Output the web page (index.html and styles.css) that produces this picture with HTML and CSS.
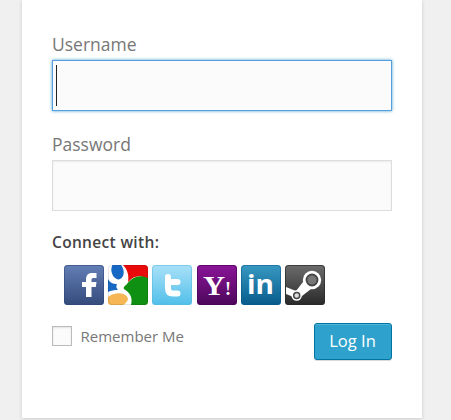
FILE: index.html
```html
<!DOCTYPE html>
<html lang="en">
<head>
<meta charset="utf-8">
<title>Log In</title>
<link rel="stylesheet" href="styles.css">
</head>
<body>
<form class="login">
  <label class="label" for="user">Username</label>
  <div class="field field-active"><span class="caret"></span><input id="user" type="text"></div>
  <label class="label label-password" for="pass">Password</label>
  <div class="field"><input id="pass" type="password"></div>
  <div class="connect">Connect with:</div>
  <div class="providers">
    <svg viewBox="0 0 40 40">
      <defs>
        <linearGradient id="fb" x2="0" y2="1"><stop stop-color="#637fb5"/><stop offset="1" stop-color="#344b7c"/></linearGradient>
        <linearGradient id="tw" x2="0" y2="1"><stop stop-color="#a9e1f8"/><stop offset="1" stop-color="#51bfe9"/></linearGradient>
        <linearGradient id="ya" x2="0" y2="1"><stop stop-color="#8b1598"/><stop offset="1" stop-color="#4c075b"/></linearGradient>
        <linearGradient id="li" x2="0" y2="1"><stop stop-color="#3899c2"/><stop offset="1" stop-color="#075b8b"/></linearGradient>
        <linearGradient id="st" x2="0" y2="1"><stop stop-color="#6c6c6c"/><stop offset="1" stop-color="#292929"/></linearGradient>
        <clipPath id="tile"><rect width="40" height="40" rx="3.5"/></clipPath>
      </defs>
      <rect width="40" height="40" rx="3.5" fill="url(#fb)"/>
      <rect x=".5" y=".5" width="39" height="39" rx="3" fill="none" stroke="#2d467a" stroke-opacity=".55"/>
      <path d="M22 32V22h-4v-5h4v-2.500c0-4.500 2.500-6.500 6-6.500h4.500v5H29.500c-1.600 0-2 .7-2 2v2h5l-.7 5H27.500v10z" fill="#fff"/>
    </svg>
    <svg viewBox="0 0 40 40">
      <g clip-path="url(#tile)">
        <rect width="40" height="40" fill="#fff"/>
        <path d="M15 0h25v14c-8-5-15-3-20 3 1-6 0-12-5-17z" fill="#e90b0b"/>
        <path d="M40 13v27H23c2-8-1-12-7-16-1-2 1-3 3-5 5-7 13-10 21-6z" fill="#109012"/>
        <ellipse cx="9.500" cy="6" rx="6" ry="8.500" transform="rotate(-14 9.500 6)" fill="#1768c4"/>
        <path d="M0 14c2 4 5 5 9 5-1 2-1 4 1 6-4 0-7 .5-10 2z" fill="#1768c4"/>
        <ellipse cx="9" cy="35" rx="11" ry="6.500" transform="rotate(-8 9 35)" fill="#f5b653"/>
      </g>
      <rect x=".5" y=".5" width="39" height="39" rx="3" fill="none" stroke="#000" stroke-opacity=".1"/>
    </svg>
    <svg viewBox="0 0 40 40">
      <rect width="40" height="40" rx="3.500" fill="url(#tw)"/>
      <rect x=".5" y=".5" width="39" height="39" rx="3" fill="none" stroke="#58b9df" stroke-opacity=".55"/>
      <path d="M16 12v11.500q0 5 5 5h4.500M16 17h9.500" fill="none" stroke="#fff" stroke-width="6" stroke-linecap="round" stroke-linejoin="round"/>
    </svg>
    <svg viewBox="0 0 40 40">
      <rect width="40" height="40" rx="3.500" fill="url(#ya)"/>
      <rect x=".5" y=".5" width="39" height="39" rx="3" fill="none" stroke="#450455" stroke-opacity=".6"/>
      <text class="yahoo" x="6" y="29.500" textLength="22" lengthAdjust="spacingAndGlyphs">Y</text>
      <text class="bang" x="28" y="29.500">!</text>
    </svg>
    <svg viewBox="0 0 40 40">
      <rect width="40" height="40" rx="3.500" fill="url(#li)"/>
      <rect x=".5" y=".5" width="39" height="39" rx="3" fill="none" stroke="#07588a" stroke-opacity=".5"/>
      <text class="linkedin" x="6" y="29" textLength="27" lengthAdjust="spacingAndGlyphs">in</text>
    </svg>
    <svg viewBox="0 0 40 40">
      <rect width="40" height="40" rx="3.500" fill="url(#st)"/>
      <path d="M1 22l10 4 7-9 9-2 8 4-9 5-9 7-6 4-5-4-5-2z" fill="#fff"/>
      <circle cx="27" cy="15" r="9.200" fill="#fff"/>
      <circle cx="27" cy="15" r="5.500" fill="#777" stroke="#444" stroke-width="1.800"/>
      <circle cx="11.700" cy="30.500" r="5.200" fill="#fff"/>
      <circle cx="11.700" cy="30.500" r="3" fill="#ddd" stroke="#444" stroke-width="1.500"/>
      <rect x=".5" y=".5" width="39" height="39" rx="3" fill="none" stroke="#292929" stroke-opacity=".7"/>
    </svg>
  </div>
  <div class="actions">
    <label class="remember"><input class="check" type="checkbox"><span>Remember Me</span></label>
    <button class="submit" type="button">Log In</button>
  </div>
</form>
</body>
</html>
```
FILE: styles.css
```css
* { box-sizing: border-box; }
body {
  margin: 0;
  height: 420px;
  overflow: hidden;
  background: #f0f0f0;
  font-family: "Open Sans", sans-serif;
  color: #777;
}
.login {
  width: 400px;
  height: 418px;
  margin-left: 22px;
  padding: 32px 30px 0;
  background: #fff;
  box-shadow: 0 1px 4px rgba(0, 0, 0, .16);
}
.label {
  display: block;
  height: 28px;
  font-size: 17.5px;
  line-height: 25px;
}
.label-password { margin-top: 21px; }
.field {
  display: flex;
  align-items: center;
  height: 51px;
  padding: 0 3px;
  border: 1px solid #ddd;
  background: #fbfbfb;
  box-shadow: inset 0 1px 2px rgba(0, 0, 0, .07);
}
.field input {
  flex: 1;
  min-width: 0;
  height: 40px;
  border: 0;
  outline: 0;
  background: transparent;
  font: 30px "Open Sans", sans-serif;
}
.field-active {
  border-color: #569fdf;
  box-shadow: 0 0 3px rgba(30, 140, 190, .8);
}
.caret {
  width: 1px;
  height: 41px;
  background: #222;
}
.connect {
  height: 54px;
  padding-top: 20px;
  font-size: 15.5px;
  font-weight: 600;
  line-height: 22px;
  letter-spacing: .33px;
  color: #444;
}
.providers {
  display: flex;
  gap: 4.2px;
  height: 40px;
  padding-left: 12px;
}
.providers svg {
  flex: none;
  width: 40px;
  height: 40px;
}
.providers text { fill: #fff; font-weight: 700; }
.yahoo { font-family: "Liberation Serif", serif; font-size: 27px; }
.bang { font-family: "Liberation Serif", serif; font-size: 18px; }
.linkedin { font-family: "Open Sans", sans-serif; font-size: 27px; }
.actions {
  display: flex;
  justify-content: space-between;
  margin-top: 18px;
}
.remember {
  display: flex;
  align-items: center;
  gap: 8.5px;
  height: 26px;
  font-size: 15px;
}
.check {
  appearance: none;
  width: 20px;
  height: 20px;
  margin: 0;
  border: 1px solid #bbb;
  background: #fbfbfb;
  box-shadow: inset 0 1px 2px rgba(0, 0, 0, .1);
}
.submit {
  width: 78px;
  height: 37px;
  padding: 0 1px 2px 0;
  border: 1px solid #0074a2;
  border-radius: 3px;
  background: #2ea2cc;
  box-shadow: inset 0 1px 0 rgba(120, 200, 230, .5), 0 1px 0 rgba(0, 0, 0, .15);
  color: #fff;
  font: 16.5px "Open Sans", sans-serif;
}
```
